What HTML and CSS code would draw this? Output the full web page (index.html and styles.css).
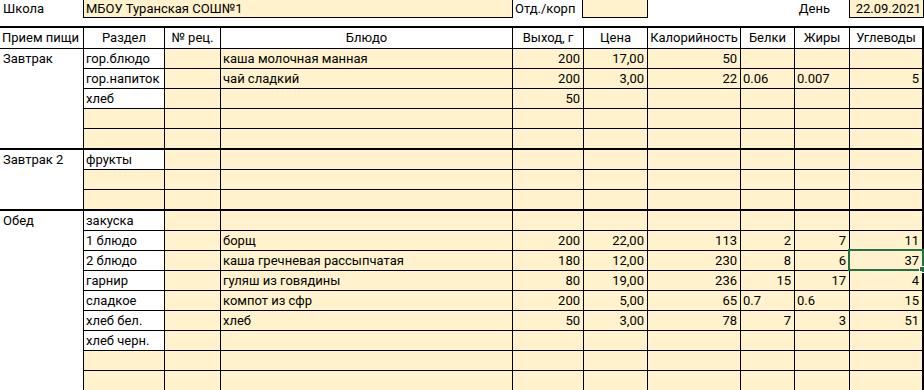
FILE: index.html
```html
<!DOCTYPE html>
<html lang="ru">
<head>
<meta charset="utf-8">
<link rel="stylesheet" href="styles.css">
</head>
<body>
<div class="sheet">
  <div class="topbar">
    <div class="tb tb-label">Школа</div>
    <div class="tb tb-box tb-school">МБОУ Туранская СОШ№1</div>
    <div class="tb tb-label tb-otd">Отд./корп</div>
    <div class="tb tb-box tb-korp"></div>
    <div class="tb tb-label tb-day">День</div>
    <div class="tb tb-box tb-date">22.09.2021</div>
  </div>

  <div class="table">
    <div class="row head">
      <div class="c w">Прием пищи</div>
      <div class="c w ctr">Раздел</div>
      <div class="c w ctr">№ рец.</div>
      <div class="c w ctr">Блюдо</div>
      <div class="c w ctr">Выход, г</div>
      <div class="c w ctr">Цена</div>
      <div class="c w ctr">Калорийность</div>
      <div class="c w ctr">Белки</div>
      <div class="c w ctr">Жиры</div>
      <div class="c w ctr">Углеводы</div>
    </div>

    <div class="section">
      <div class="meal">Завтрак</div>
      <div class="rows">
        <div class="row sub"><div class="c w">гор.блюдо</div><div class="c"></div><div class="c">каша молочная манная</div><div class="c n">200</div><div class="c n">17,00</div><div class="c n">50</div><div class="c"></div><div class="c"></div><div class="c"></div></div>
        <div class="row sub"><div class="c w">гор.напиток</div><div class="c"></div><div class="c">чай сладкий</div><div class="c n">200</div><div class="c n">3,00</div><div class="c n">22</div><div class="c">0.06</div><div class="c">0.007</div><div class="c n">5</div></div>
        <div class="row sub"><div class="c w">хлеб</div><div class="c"></div><div class="c"></div><div class="c n">50</div><div class="c"></div><div class="c"></div><div class="c"></div><div class="c"></div><div class="c"></div></div>
        <div class="row sub"><div class="c"></div><div class="c"></div><div class="c"></div><div class="c"></div><div class="c"></div><div class="c"></div><div class="c"></div><div class="c"></div><div class="c"></div></div>
        <div class="row sub last"><div class="c"></div><div class="c"></div><div class="c"></div><div class="c"></div><div class="c"></div><div class="c"></div><div class="c"></div><div class="c"></div><div class="c"></div></div>
      </div>
    </div>

    <div class="section">
      <div class="meal">Завтрак 2</div>
      <div class="rows">
        <div class="row sub"><div class="c w">фрукты</div><div class="c"></div><div class="c"></div><div class="c"></div><div class="c"></div><div class="c"></div><div class="c"></div><div class="c"></div><div class="c"></div></div>
        <div class="row sub"><div class="c"></div><div class="c"></div><div class="c"></div><div class="c"></div><div class="c"></div><div class="c"></div><div class="c"></div><div class="c"></div><div class="c"></div></div>
        <div class="row sub last"><div class="c"></div><div class="c"></div><div class="c"></div><div class="c"></div><div class="c"></div><div class="c"></div><div class="c"></div><div class="c"></div><div class="c"></div></div>
      </div>
    </div>

    <div class="section open">
      <div class="meal">Обед</div>
      <div class="rows">
        <div class="row sub"><div class="c w">закуска</div><div class="c"></div><div class="c"></div><div class="c"></div><div class="c"></div><div class="c"></div><div class="c"></div><div class="c"></div><div class="c"></div></div>
        <div class="row sub"><div class="c w">1 блюдо</div><div class="c"></div><div class="c">борщ</div><div class="c n">200</div><div class="c n">22,00</div><div class="c n">113</div><div class="c n">2</div><div class="c n">7</div><div class="c n">11</div></div>
        <div class="row sub"><div class="c w">2 блюдо</div><div class="c"></div><div class="c">каша гречневая рассыпчатая</div><div class="c n">180</div><div class="c n">12,00</div><div class="c n">230</div><div class="c n">8</div><div class="c n">6</div><div class="c n sel">37<span class="selbox"></span></div></div>
        <div class="row sub"><div class="c w">гарнир</div><div class="c"></div><div class="c">гуляш из говядины</div><div class="c n">80</div><div class="c n">19,00</div><div class="c n">236</div><div class="c n">15</div><div class="c n">17</div><div class="c n">4</div></div>
        <div class="row sub"><div class="c w">сладкое</div><div class="c"></div><div class="c">компот из сфр</div><div class="c n">200</div><div class="c n">5,00</div><div class="c n">65</div><div class="c">0.7</div><div class="c">0.6</div><div class="c n">15</div></div>
        <div class="row sub"><div class="c w">хлеб бел.</div><div class="c"></div><div class="c">хлеб</div><div class="c n">50</div><div class="c n">3,00</div><div class="c n">78</div><div class="c n">7</div><div class="c n">3</div><div class="c n">51</div></div>
        <div class="row sub"><div class="c w">хлеб черн.</div><div class="c"></div><div class="c"></div><div class="c"></div><div class="c"></div><div class="c"></div><div class="c"></div><div class="c"></div><div class="c"></div></div>
        <div class="row sub"><div class="c"></div><div class="c"></div><div class="c"></div><div class="c"></div><div class="c"></div><div class="c"></div><div class="c"></div><div class="c"></div><div class="c"></div></div>
        <div class="row sub"><div class="c"></div><div class="c"></div><div class="c"></div><div class="c"></div><div class="c"></div><div class="c"></div><div class="c"></div><div class="c"></div><div class="c"></div></div>
      </div>
    </div>
  </div>
</div>
</body>
</html>
```

FILE: styles.css
```css
* { box-sizing: border-box; }
html, body { margin: 0; padding: 0; background: #fff; }
body {
  font-family: Roboto, "Noto Sans", "Liberation Sans", sans-serif;
  font-size: 13px;
  color: #000;
  overflow: hidden;
}
.sheet { width: 924px; height: 390px; overflow: hidden; }

.topbar {
  display: grid;
  grid-template-columns: 83px 430px 69px 66px 201px 75px;
  height: 18px;
  margin-bottom: 8px;
}
.tb {
  height: 18px;
  line-height: 17px;
  padding: 0 3px;
  white-space: nowrap;
  overflow: hidden;
}
.tb-box {
  background: #FFF2CC;
  border: 1px solid #000;
  border-top: none;
}
.tb-school { padding-left: 2px; }
.tb-otd { padding-left: 2px; }
.tb-day { text-align: right; padding-right: 19px; }
.tb-date { text-align: right; padding-right: 2px; }

.table {
  width: 924px;
  border-top: 2px solid #000;
  border-right: 2px solid #000;
}
.row {
  display: grid;
  height: 20px;
}
.head {
  grid-template-columns: 84px 81px 56px 292px 71px 64px 93px 54px 55px 72px;
  height: 21px;
  border-bottom: 1px solid #000;
}
.sub {
  grid-template-columns: 81px 56px 292px 71px 64px 93px 54px 55px 72px;
  border-bottom: 1px solid #000;
}
.sub.last { border-bottom: none; height: 19px; }

.c {
  position: relative;
  background: #FFF2CC;
  border-right: 1px solid #000;
  padding: 0 3px 0 2px;
  line-height: 19px;
  white-space: nowrap;
  overflow: visible;
}
.head .c { line-height: 20px; }
.c:last-child { border-right: none; }
.w { background: #fff; }
.ctr { text-align: center; padding: 0; }
.head .c:first-child { padding: 0 0 0 2px; text-align: left; }
.n { text-align: right; }

.section {
  display: grid;
  grid-template-columns: 84px 1fr;
  border-bottom: 2px solid #000;
}
.section.open { border-bottom: none; }
.meal {
  background: #fff;
  border-right: 1px solid #000;
  padding-left: 3px;
  line-height: 19px;
}

.selbox {
  position: absolute;
  left: -2px;
  top: -2px;
  right: -2px;
  bottom: -1px;
  border: 2px solid #217346;
  pointer-events: none;
}
.selbox::after {
  content: "";
  position: absolute;
  right: -4px;
  bottom: -4px;
  width: 5px;
  height: 5px;
  background: #217346;
  border: 1px solid #fff;
}
```
